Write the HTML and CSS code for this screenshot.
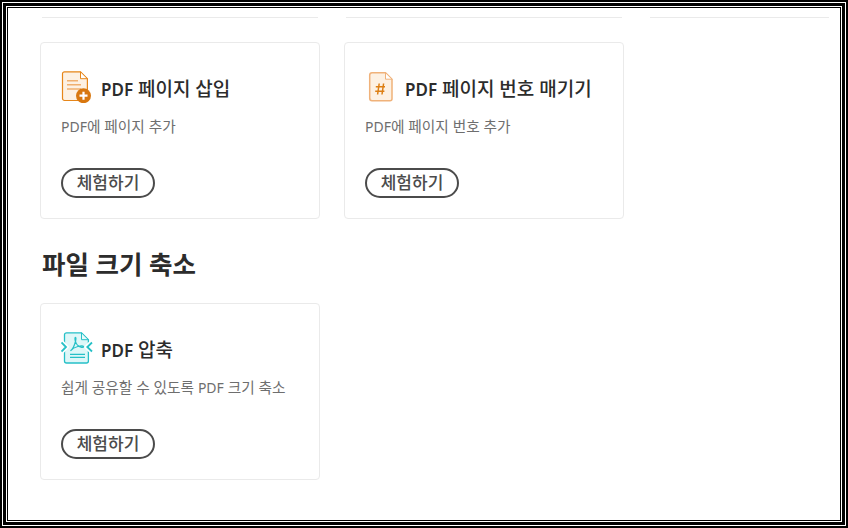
FILE: index.html
```html
<!DOCTYPE html>
<html lang="ko">
<head>
    <meta charset="UTF-8">
    <meta name="viewport" content="width=device-width, initial-scale=1.0">
    <title>PDF 도구</title>
    <link rel="stylesheet" href="styles.css">
</head>
<body>
    <div class="frame-outer">
        <div class="frame-middle">
            <div class="frame-inner">
                <div class="page">
                    <!-- 윗줄 카드의 아랫선 -->
                    <div class="rule-row">
                        <div class="rule"></div>
                        <div class="rule"></div>
                        <div class="rule rule-short"></div>
                    </div>

                    <div class="card-grid">
                        <div class="card">
                            <div class="card-head">
                                <svg class="card-icon" viewBox="0 0 32 32">
                                    <path d="M3.5 0.8H19.5L26.4 7.7V27.5A2 2 0 0 1 24.4 29.5H3.5A2 2 0 0 1 1.5 27.5V2.8A2 2 0 0 1 3.5 0.8Z" fill="#fdf1e3" stroke="#e68619" stroke-width="1.2"/>
                                    <path d="M19.5 0.8V7.7H26.4Z" fill="#fff" stroke="#e68619" stroke-width="1"/>
                                    <path d="M6 9.7H17M6 13.7H20M6 18H20" stroke="#f0b070" stroke-width="1.4" fill="none"/>
                                    <circle cx="22.5" cy="24.7" r="7.5" fill="#d8770f"/>
                                    <path d="M22.5 20.7V28.7M18.5 24.7H26.5" stroke="#fff" stroke-width="2.2"/>
                                </svg>
                                <h3><span class="latin">PDF</span> 페이지 삽입</h3>
                            </div>
                            <p><span class="latin">PDF</span>에 페이지 추가</p>
                            <a href="#" class="try-button">체험하기</a>
                        </div>

                        <div class="card">
                            <div class="card-head">
                                <svg class="card-icon" viewBox="0 0 32 32">
                                    <path d="M7 1.7H20.5L27 8.2V27.7A2 2 0 0 1 25 29.7H7A2.4 2.4 0 0 1 4.7 27.4V4A2.4 2.4 0 0 1 7 1.7Z" fill="#fdf1e3" stroke="#f0b27a" stroke-width="1.5"/>
                                    <path d="M20.5 1.7V8.2H27Z" fill="#fff" stroke="#f0b27a" stroke-width="1"/>
                                    <path d="M14.2 12.5L12.6 23.5M18.6 12.5L17 23.5M10.8 15.8H20M10.2 20.2H19.4" stroke="#dd7f14" stroke-width="1.5" fill="none"/>
                                </svg>
                                <h3><span class="latin">PDF</span> 페이지 번호 매기기</h3>
                            </div>
                            <p><span class="latin">PDF</span>에 페이지 번호 추가</p>
                            <a href="#" class="try-button">체험하기</a>
                        </div>
                    </div>

                    <h2>파일 크기 축소</h2>

                    <div class="card-grid">
                        <div class="card">
                            <div class="card-head">
                                <svg class="card-icon" viewBox="0 0 32 32">
                                    <path d="M5.5 0.8H20.5L27.4 7.7V29A2 2 0 0 1 25.4 31H5.5A2 2 0 0 1 3.5 29V2.8A2 2 0 0 1 5.5 0.8Z" fill="#dff7f8" stroke="#26c0c7" stroke-width="1.3"/>
                                    <path d="M20.5 0.8V7.7H27.4Z" fill="#e9fafb" stroke="#26c0c7" stroke-width="1"/>
                                    <path d="M0 9.2L5.6 15L0 20.8M31.5 9.2L25.4 15L31.5 20.8" fill="none" stroke="#fff" stroke-width="4"/>
                                    <path d="M0.5 10.5L5 15L0.5 19.5M31 10.5L26.3 15L31 19.5" fill="none" stroke="#26c0c7" stroke-width="1.8"/>
                                    <path d="M9.5 18.8C11.5 17.5 13.6 13 14.6 9C15.1 6.8 15 5.4 14.5 5.4C13.9 5.4 13.8 6.8 14.2 8.6C15 11.6 17.6 14.6 20 15.2C21.8 15.6 22.8 15.2 22.6 14.6C22.3 13.8 19.6 13.8 16.8 14.5C14 15.2 11.2 16.8 9.5 18.8Z" fill="none" stroke="#26c0c7" stroke-width="1.2"/>
                                    <path d="M9 22.3H24M9 25.3H24" stroke="#26c0c7" stroke-width="1.3" fill="none"/>
                                </svg>
                                <h3><span class="latin">PDF</span> 압축</h3>
                            </div>
                            <p>쉽게 공유할 수 있도록 <span class="latin">PDF</span> 크기 축소</p>
                            <a href="#" class="try-button">체험하기</a>
                        </div>
                    </div>
                </div>
            </div>
        </div>
    </div>
</body>
</html>
```

FILE: styles.css
```css
* {
    margin: 0;
    padding: 0;
    box-sizing: border-box;
    font-family: "Noto Sans", "Noto Sans CJK KR", sans-serif;
}

body {
    width: 848px;
    height: 528px;
    overflow: hidden;
    background: white;
}

/* 바깥 삼중 테두리 */
.frame-outer {
    height: 100%;
    border: 2px solid black;
    padding: 1px;
}

.frame-middle {
    height: 100%;
    border: 3px solid black;
    padding: 1px;
}

.frame-inner {
    height: 100%;
    border: 1px solid black;
    overflow: hidden;
}

.page {
    padding: 9px 0 0 32px;
}

.rule-row {
    display: grid;
    grid-template-columns: 280px 280px 184px;
    column-gap: 24px;
    margin-bottom: 24px;
}

.rule {
    height: 1px;
    margin: 0 2px;
    background: #eaeaea;
}

.rule-short {
    margin-right: 3px;
}

.card-grid {
    display: grid;
    grid-template-columns: 280px 280px;
    column-gap: 24px;
}

.card {
    height: 177px;
    padding: 28px 20px 20px;
    background: white;
    border: 1px solid #eaeaea;
    border-radius: 4px;
}

.card-head {
    display: flex;
    align-items: center;
    gap: 8px;
    height: 32px;
}

.card-icon {
    width: 32px;
    height: 32px;
    flex-shrink: 0;
}

.card-head h3 {
    margin-top: 4px;
    font-size: 19px;
    font-weight: 500;
    line-height: 34px;
    color: #2c2c2c;
}

.card-head .latin {
    font-size: 17px;
    font-weight: 600;
}

.card p {
    margin-top: 13px;
    height: 20px;
    font-size: 14.7px;
    line-height: 20px;
    color: #6e6e6e;
}

.card p .latin {
    font-size: 14px;
}

.try-button {
    display: block;
    width: 94px;
    height: 30px;
    margin-top: 32px;
    border: 2px solid #4b4b4b;
    border-radius: 15px;
    font-size: 17px;
    font-weight: 500;
    line-height: 25px;
    text-align: center;
    text-decoration: none;
    color: #4b4b4b;
}

h2 {
    margin: 27px 0 21px 2px;
    height: 36px;
    font-size: 25.5px;
    font-weight: 700;
    line-height: 36px;
    color: #2c2c2c;
}
```
